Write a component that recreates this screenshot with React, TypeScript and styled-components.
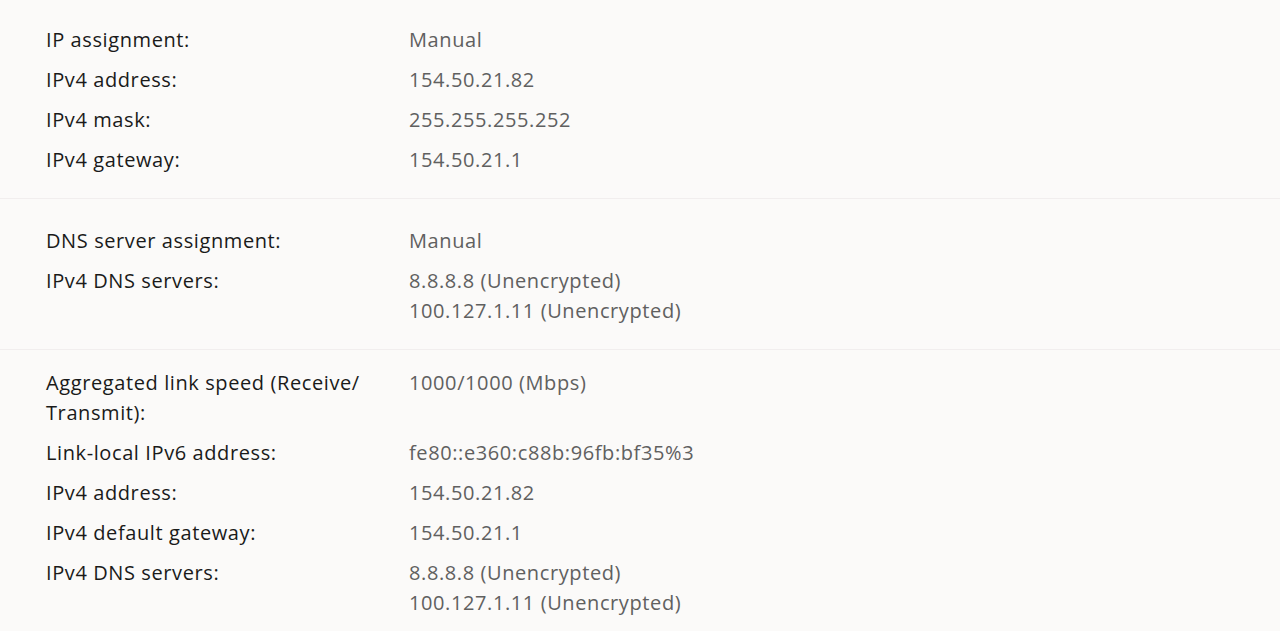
import React from "react";
import styled, { createGlobalStyle } from "styled-components";

const Global = createGlobalStyle`
  html, body { margin: 0; padding: 0; background: #fbfaf9; }
  body { font-family: "Open Sans", "Noto Sans", sans-serif; }
`;

const Page = styled.div`
  width: 1280px;
  height: 631px;
  overflow: hidden;
  background: #fbfaf9;
  display: flex;
  flex-direction: column;
`;

const Section = styled.section<{ $top: number; $bottom: number; $last?: boolean }>`
  display: flex;
  flex-direction: column;
  gap: 10px;
  padding: ${(p) => p.$top}px 0 ${(p) => p.$bottom}px 46px;
  border-bottom: ${(p) => (p.$last ? "none" : "1px solid #f1eeee")};
`;

const Row = styled.div`
  display: grid;
  grid-template-columns: 363px 1fr;
  font-size: 20px;
  letter-spacing: 0.6px;
  line-height: 30px;
`;

const Label = styled.div`
  color: #1a1a1a;
  padding-right: 14px;
`;

const Value = styled.div`
  color: #606060;
  display: flex;
  flex-direction: column;
`;

type Item = { label: string; values: string[] };

const sections: { top: number; bottom: number; items: Item[] }[] = [
  {
    top: 25,
    bottom: 23,
    items: [
      { label: "IP assignment:", values: ["Manual"] },
      { label: "IPv4 address:", values: ["154.50.21.82"] },
      { label: "IPv4 mask:", values: ["255.255.255.252"] },
      { label: "IPv4 gateway:", values: ["154.50.21.1"] },
    ],
  },
  {
    top: 27,
    bottom: 23,
    items: [
      { label: "DNS server assignment:", values: ["Manual"] },
      {
        label: "IPv4 DNS servers:",
        values: ["8.8.8.8 (Unencrypted)", "100.127.1.11 (Unencrypted)"],
      },
    ],
  },
  {
    top: 18,
    bottom: 20,
    items: [
      { label: "Aggregated link speed (Receive/ Transmit):", values: ["1000/1000 (Mbps)"] },
      { label: "Link-local IPv6 address:", values: ["fe80::e360:c88b:96fb:bf35%3"] },
      { label: "IPv4 address:", values: ["154.50.21.82"] },
      { label: "IPv4 default gateway:", values: ["154.50.21.1"] },
      {
        label: "IPv4 DNS servers:",
        values: ["8.8.8.8 (Unencrypted)", "100.127.1.11 (Unencrypted)"],
      },
    ],
  },
];

export default function App() {
  return (
    <Page>
      <Global />
      {sections.map((s, i) => (
        <Section key={i} $top={s.top} $bottom={s.bottom} $last={i === sections.length - 1}>
          {s.items.map((it, j) => (
            <Row key={j}>
              <Label>{it.label}</Label>
              <Value>
                {it.values.map((v, k) => (
                  <span key={k}>{v}</span>
                ))}
              </Value>
            </Row>
          ))}
        </Section>
      ))}
    </Page>
  );
}
